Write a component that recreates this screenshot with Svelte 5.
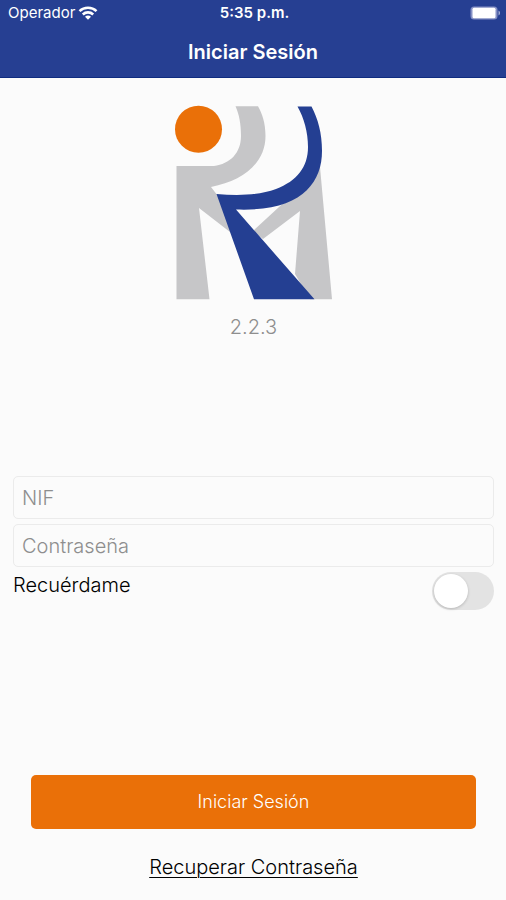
<script lang="ts">
  let nif = '';
  let password = '';
  let remember = false;

  /**
   * Handle the login form
   */
  function handleLogin() {
    console.log('Login', { nif, remember });
  }
</script>

<div class="login-screen">
  <header>
    <div class="status-bar">
      <div class="carrier">
        <span>Operador</span>
        <svg viewBox="0 0 20 15" width="20" height="15" aria-hidden="true">
          <g fill="none" stroke="#fff" stroke-width="2.6">
            <path d="M1.5 5.1C6.2 0.7 13.8 0.7 18.5 5.1" />
            <path d="M4.8 8.5C7.8 5.7 12.2 5.7 15.2 8.5" />
          </g>
          <path d="M7 10.7C8.7 9.2 11.3 9.2 13 10.7L10 13.7Z" fill="#fff" />
        </svg>
      </div>
      <span class="time">5:35 p.m.</span>
      <div class="battery">
        <svg viewBox="0 0 31 14" width="31" height="14" aria-hidden="true">
          <rect x="0.5" y="0.5" width="27" height="13" rx="3.5" fill="#8590c4" />
          <rect x="2.5" y="1.8" width="23" height="10.4" rx="1.5" fill="#fff" />
          <path d="M28.5 4.5C30.5 5.2 30.5 8.8 28.5 9.5Z" fill="#a5aed6" />
        </svg>
      </div>
    </div>
    <h1>Iniciar Sesión</h1>
  </header>

  <main>
    <section class="brand">
      <svg viewBox="0 0 158 195" width="158" height="195" role="img" aria-label="RM">
        <g fill="#c6c6c8">
          <path d="M60.5 1.3H83C87 8 90.500 18 90.500 31C90.500 58 68 76 36 82L43 91L60 132L55 127L24 103L34.5 194.300H1.500V61H39C55 59 66 48 66 31C66 19 64 9 60.5 1.300Z" />
          <path d="M145 62L157 194.300H135L120 169L125 106L88 134L78 126L104 102Z" />
        </g>
        <path
          fill="#243f92"
          d="M122.5 1.500H136.500C143 14 147 28 147 46C147 79 125 107 61 104.500L139.500 194.300H79L41.500 89C65 91 85 90 101 84C122 76 133 62 133 42C133 27 129 13 122.500 1.500Z"
        />
        <circle cx="23.5" cy="24.2" r="23.5" fill="#ea7008" />
      </svg>
      <p class="version">2.2.3</p>
    </section>

    <form id="login-form" on:submit|preventDefault={handleLogin}>
      <input class="field" type="text" placeholder="NIF" aria-label="NIF" bind:value={nif} />
      <input
        class="field"
        type="password"
        placeholder="Contraseña"
        aria-label="Contraseña"
        bind:value={password}
      />
      <div class="remember">
        <label for="remember">Recuérdame</label>
        <input id="remember" class="switch" type="checkbox" bind:checked={remember} />
      </div>
    </form>

    <div class="actions">
      <button type="submit" form="login-form">Iniciar Sesión</button>
      <a href="#recuperar">Recuperar Contraseña</a>
    </div>
  </main>
</div>

<style>
  :global(body) {
    margin: 0;
    background-color: #fbfbfb;
  }

  .login-screen {
    display: flex;
    flex-direction: column;
    min-height: 100vh;
    background-color: #fbfbfb;
    color: #000;
    font-family: Inter, 'Liberation Sans', sans-serif;
    font-size: 20px;
    font-weight: 300;
    line-height: 26px;
  }

  header {
    background-color: #263f92;
    border-bottom: 1px solid #0f2c80;
    color: #fff;
    padding-bottom: 13px;
  }

  .status-bar {
    display: grid;
    grid-template-columns: 1fr auto 1fr;
    align-items: center;
    height: 26px;
    padding: 0 5px 0 8px;
    font-size: 15px;
    font-weight: 400;
  }

  .carrier {
    display: flex;
    align-items: center;
    gap: 3px;
  }

  .time {
    font-weight: 600;
  }

  .battery {
    display: flex;
    justify-content: flex-end;
  }

  h1 {
    margin: 14px 0 0;
    font-size: 20px;
    font-weight: 600;
    line-height: 24px;
    text-align: center;
  }

  main {
    display: flex;
    flex: 1;
    flex-direction: column;
    justify-content: space-between;
    padding: 27px 12px 20px 13px;
  }

  .brand {
    display: flex;
    flex-direction: column;
    align-items: center;
    gap: 14px;
  }

  .version {
    margin: 0;
    color: #8e8e8e;
  }

  form {
    display: flex;
    flex-direction: column;
    gap: 5px;
    padding-bottom: 29px;
  }

  .field {
    box-sizing: border-box;
    width: 100%;
    height: 43px;
    border: 1px solid #ebebeb;
    border-radius: 5px;
    background-color: transparent;
    padding: 1px 8px 0;
    color: #000;
    font: inherit;
  }

  .field::placeholder {
    color: #8e8e8e;
    opacity: 1;
  }

  .remember {
    display: flex;
    align-items: flex-start;
    justify-content: space-between;
  }

  .switch {
    display: flex;
    align-items: center;
    box-sizing: border-box;
    width: 62px;
    height: 38px;
    margin: 0;
    border-radius: 19px;
    background-color: #e3e3e3;
    padding: 2px;
    appearance: none;
    cursor: pointer;
  }

  .switch::before {
    content: '';
    width: 34px;
    height: 34px;
    border-radius: 50%;
    background-color: #fff;
    box-shadow: 0 1px 3px rgba(0, 0, 0, 0.2);
  }

  .switch:checked {
    justify-content: flex-end;
    background-color: #ea7008;
  }

  .actions {
    display: flex;
    flex-direction: column;
    align-items: center;
    gap: 25px;
    padding: 0 18px;
  }

  button {
    width: 100%;
    height: 54px;
    border: none;
    border-radius: 5px;
    background-color: #ea7008;
    color: #fff;
    font: inherit;
    font-size: 18px;
    cursor: pointer;
  }

  a {
    color: #000;
    text-decoration: underline;
    text-decoration-thickness: 1px;
    text-underline-offset: 3px;
  }
</style>
